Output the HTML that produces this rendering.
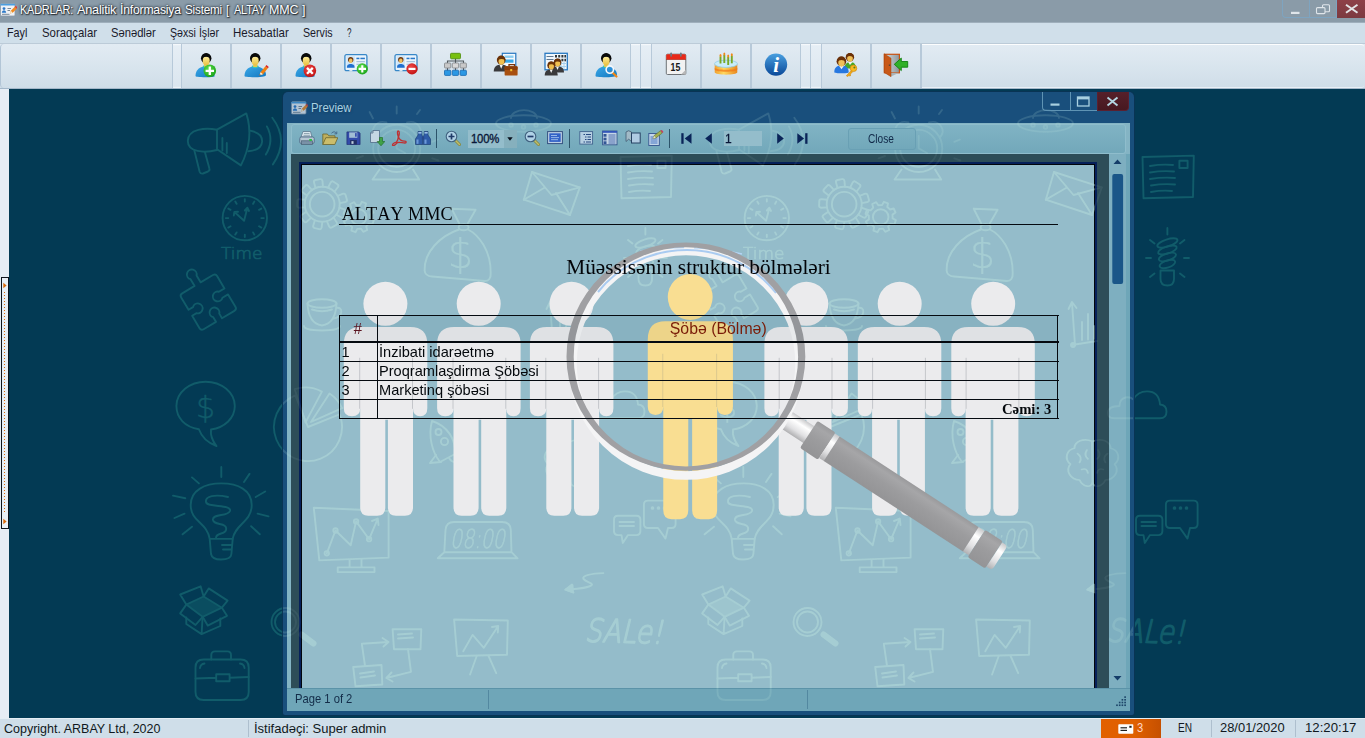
<!DOCTYPE html>
<html lang="az">
<head>
<meta charset="utf-8">
<title>KADRLAR: Analitik İnformasiya Sistemi [ ALTAY MMC ]</title>
<style>
*{box-sizing:border-box;margin:0;padding:0}
html,body{width:1365px;height:738px;overflow:hidden;background:#033a54;font-family:"Liberation Sans",sans-serif;font-size:12px;color:#101820}
.abs{position:absolute}
svg.full{position:absolute;left:0;top:0;width:1365px;height:738px;overflow:hidden;pointer-events:none}
.dood{fill:none;stroke:currentColor;stroke-width:1.9;stroke-linecap:round;stroke-linejoin:round}
.dood .dt{fill:currentColor;stroke:none;font-family:"DejaVu Sans","Liberation Sans",sans-serif}
.dood .df{fill:currentColor;fill-opacity:.55}
#titlebar{position:absolute;left:0;top:0;width:1365px;height:22px;background:#8a9ba8}
#titlebar .cap{position:absolute;left:20px;top:3px;font-size:12.6px;color:#fff;text-shadow:0 0 2px #24303c,0 0 3px #24303c,1px 1px 1px #333;white-space:nowrap;letter-spacing:-0.22px}
#menubar{position:absolute;left:0;top:22px;width:1365px;height:21px;background:#d0dfea}
#menubar span{position:absolute;transform-origin:0 0;top:3.5px;font-size:12.4px;color:#1a1a2a;white-space:nowrap}
#toolbar{position:absolute;left:0;top:43px;width:1365px;height:46px;background:linear-gradient(#e2ebf3,#d9e5ee 50%,#cfdde8);border-top:1px solid #bccbd8;border-bottom:1px solid #a4b8ca}
.tsep{position:absolute;top:44px;height:44px;width:2px;background:#b7c9d9}
.tgrip{position:absolute;top:44px;height:44px;background:linear-gradient(#fafcfe,#e6eef5 4%,#dbe6ef 96%,#f4f8fb);border-left:1px solid #b7c9d9;border-right:1px solid #b7c9d9}
.ticon{position:absolute;top:49px;width:32px;height:32px}
#leftstrip{position:absolute;left:0;top:89px;width:9px;height:629px;background:#e6edf5}
#mdi{position:absolute;left:9px;top:89px;width:1356px;height:629px;background:#033a54;overflow:hidden}
#statusbar{position:absolute;left:0;top:718px;width:1365px;height:20px;background:#cfdee9;border-top:1px solid #e4edf4}
#statusbar span,#stx span{position:absolute;transform-origin:0 0;top:3.3px;font-size:12.4px;color:#101820;white-space:nowrap}
.ssep{position:absolute;top:720px;width:1px;height:17px;background:#aebfce}
/* preview window */
#pw{position:absolute;left:283px;top:92px;width:850.500px;height:623px;background:#194f7c;border-radius:5px 5px 2px 2px;box-shadow:0 0 0 1px rgba(10,52,84,.9)}
#pwtitle{position:absolute;left:311px;top:100.800px;font-size:12.4px;color:#a9d2e2;text-shadow:0 0 3px #0c3050}
#pclient{position:absolute;left:287px;top:123px;width:843px;height:588px;background:#84b4c4}
#ptool{position:absolute;left:291px;top:123.500px;width:835px;height:30px;background:linear-gradient(#80b3c4,#72a8ba);border:1px solid #8fbdcc;border-radius:3px}
#pdark{position:absolute;left:291px;top:154px;width:818px;height:534px;background:#2d4d58}
#ppageb{position:absolute;left:299px;top:162.300px;width:798px;height:525.700px;background:#06205a}
#ppage{position:absolute;left:302.300px;top:165px;width:791.500px;height:523px;background:#94bcca;overflow:hidden;box-shadow:0 0 0 1px #02060c}
#pscroll{position:absolute;left:1109px;top:154px;width:17px;height:534px;background:#7eafc0}
#pstatus{position:absolute;left:287px;top:688px;width:843px;height:23px;background:#6fa6b8;border-top:1px solid #5b93a8}
#stx{position:absolute;left:0;top:718px}
#titlebar .cap,#pwtitle{transform-origin:0 0;white-space:nowrap}
/*FIT*/
#tw1{left:20.1px!important;transform:scaleX(0.866);display:inline-block}
#tw2{left:77.4px!important;transform:scaleX(1.009);display:inline-block}
#tw3{left:120.1px!important;transform:scaleX(0.970);display:inline-block}
#tw4{left:185.1px!important;transform:scaleX(0.931);display:inline-block}
#tw5{left:226.2px!important;transform:scaleX(0.884);display:inline-block}
#tw6{left:233.6px!important;transform:scaleX(0.867);display:inline-block}
#tw7{left:269.2px!important;transform:scaleX(0.992);display:inline-block}
#tw8{left:302.1px!important;transform:scaleX(0.975);display:inline-block}
#m1{left:7.2px!important;transform:scaleX(0.871);display:inline-block}
#m2{left:41.6px!important;transform:scaleX(0.918);display:inline-block}
#m3{left:110.8px!important;transform:scaleX(0.903);display:inline-block}
#m4{left:169.6px!important;transform:scaleX(0.856);display:inline-block}
#m5{left:232.9px!important;transform:scaleX(0.930);display:inline-block}
#m6{left:302.9px!important;transform:scaleX(0.860);display:inline-block}
#m7{left:347.1px!important;transform:scaleX(0.652);display:inline-block}
#s1{left:3.7px!important;transform:scaleX(1.008);display:inline-block}
#s2{left:254.0px!important;transform:scaleX(1.050);display:inline-block}
#s3{left:1136.9px!important;transform:scaleX(0.898);display:inline-block}
#s4{left:1177.9px!important;transform:scaleX(0.813);display:inline-block}
#s5{left:1220.0px!important;transform:scaleX(1.042);display:inline-block}
#s6{left:1305.1px!important;transform:scaleX(1.064);display:inline-block}
#pwtitle{left:310.6px!important;transform:scaleX(0.921);display:inline-block}
#pstxt{left:295.2px!important;transform:scaleX(0.905);display:inline-block}
#pcl{left:19.0px!important;transform:scaleX(0.817);display:inline-block}
#pzt{left:3.4px!important;transform:scaleX(0.940);display:inline-block}
/*ENDFIT*/
</style>
</head>
<body>
<div id="titlebar"><span class="cap" id="tw1">KADRLAR:</span> <span class="cap" id="tw2">Analitik</span> <span class="cap" id="tw3">İnformasiya</span> <span class="cap" id="tw4">Sistemi</span> <span class="cap" id="tw5">[</span> <span class="cap" id="tw6">ALTAY</span> <span class="cap" id="tw7">MMC</span> <span class="cap" id="tw8">]</span></div>
<div class="abs" style="left:0;top:22px;width:1365px;height:1px;background:#9fafbc;z-index:1"></div>
<div id="menubar">
<span id="m1" style="left:7px">Fayl</span><span id="m2" style="left:42px">Soraqçalar</span><span id="m3" style="left:111px">Sənədlər</span><span id="m4" style="left:170px">Şəxsi İşlər</span><span id="m5" style="left:233px">Hesabatlar</span><span id="m6" style="left:303px">Servis</span><span id="m7" style="left:347px">?</span>
</div>
<div id="toolbar"></div>
<svg width="0" height="0" style="position:absolute">
<defs>
<linearGradient id="gBody" x1="0" y1="0" x2="1" y2="1"><stop offset="0" stop-color="#3aa8e8"/><stop offset="1" stop-color="#1478c0"/></linearGradient>
<linearGradient id="gFace" x1="0" y1="0" x2="0" y2="1"><stop offset="0" stop-color="#fff0a0"/><stop offset="1" stop-color="#e8c040"/></linearGradient>
<radialGradient id="gGreen" cx=".4" cy=".35" r=".7"><stop offset="0" stop-color="#5de04a"/><stop offset="1" stop-color="#18a018"/></radialGradient>
<radialGradient id="gRed" cx=".4" cy=".35" r=".7"><stop offset="0" stop-color="#f04848"/><stop offset="1" stop-color="#c01010"/></radialGradient>
<linearGradient id="gInfo" x1="0" y1="0" x2="0" y2="1"><stop offset="0" stop-color="#4aa0e0"/><stop offset="1" stop-color="#0a4898"/></linearGradient>
<linearGradient id="gCake" x1="0" y1="0" x2="1" y2="0"><stop offset="0" stop-color="#f0a030"/><stop offset=".4" stop-color="#ffd860"/><stop offset="1" stop-color="#e88820"/></linearGradient>
<linearGradient id="gDoor" x1="0" y1="0" x2="1" y2="0"><stop offset="0" stop-color="#d8dde0"/><stop offset="1" stop-color="#8c979c"/></linearGradient>
<clipPath id="cpu"><rect x="0" y="0" width="24.500" height="32"/></clipPath>
<g id="user">
<path d="M5.5 27 C5.5 20.5 10 17.5 16 17.5 C22 17.5 27 20.5 27 26 C27 27.2 24 28.2 16 28.2 C8 28.2 5.5 27.6 5.5 27Z" fill="url(#gBody)"/>
<path d="M12.5 17.8 Q16.2 20.6 20 17.8 L19 16.6 L13.4 16.6Z" fill="#38c8b8"/>
<rect x="14.2" y="13" width="4" height="5" fill="#e8c850"/>
<circle cx="16.2" cy="9.2" r="5.2" fill="#0a0a0a"/>
<ellipse cx="16.2" cy="11.8" rx="3.5" ry="4.6" fill="url(#gFace)"/>
<path d="M11.3 9.5 Q16 6.2 21.2 9.6 Q19 4.5 16.2 4.4 Q12.8 4.5 11.3 9.5Z" fill="#0a0a0a"/>
</g>
<g id="bizman">
<path d="M0 14 C0 9.5 2.5 8 6.5 8 C10.500 8 13 9.500 13 14Z" fill="#3a3a3c"/>
<path d="M5 8 L6.500 11.500 L8 8Z" fill="#f4f4f4"/>
<circle cx="6.500" cy="4" r="3.800" fill="#6a3208"/>
<ellipse cx="6.700" cy="5" rx="2.500" ry="3.100" fill="#f0c050"/>
<path d="M2.800 4.300 Q6 1.800 10.300 4 Q9 0 6.500 0.100 Q3.500 0.200 2.800 4.300Z" fill="#6a3208"/>
</g>
<g id="idcard">
<rect x="0.500" y="0.500" width="22" height="16" rx="1.500" fill="#eaf4fc" stroke="#3888c8" stroke-width="1.300"/>
<rect x="2" y="2" width="8.500" height="11.500" fill="#cfe6f8"/>
<path d="M2.500 13.500 C2.500 10.500 4 9.800 6.300 9.800 C8.600 9.800 10.200 10.500 10.200 13.500Z" fill="#2070d0"/>
<circle cx="6.300" cy="5.600" r="2.700" fill="#703810"/>
<ellipse cx="6.300" cy="6.600" rx="1.800" ry="2.300" fill="#f0c060"/>
<rect x="12" y="3.500" width="3" height="1.500" fill="#2878c8"/><rect x="16" y="3.500" width="4.500" height="1.500" fill="#2878c8"/>
<rect x="12" y="6.800" width="8.500" height="1.200" fill="#a8c4dc"/>
<rect x="12" y="9.500" width="6" height="1.200" fill="#a8c4dc"/>
<rect x="5" y="15.500" width="3" height="1.800" fill="#d8e6f0"/><rect x="15" y="15.500" width="3" height="1.800" fill="#d8e6f0"/>
</g>
</defs>
</svg>
<div class="tgrip" style="left:172px;width:10px"></div>
<div class="tsep" style="left:230px"></div><div class="tsep" style="left:280px"></div><div class="tsep" style="left:330px"></div><div class="tsep" style="left:380px"></div><div class="tsep" style="left:430px"></div><div class="tsep" style="left:480px"></div><div class="tsep" style="left:530px"></div><div class="tsep" style="left:580px"></div>
<div class="tgrip" style="left:630px;width:11px"></div><div class="tgrip" style="left:640px;width:12px"></div>
<div class="tsep" style="left:700px"></div><div class="tsep" style="left:750px"></div>
<div class="tgrip" style="left:800px;width:11px"></div><div class="tgrip" style="left:810px;width:12px"></div>
<div class="tsep" style="left:870px"></div><div class="tsep" style="left:920px"></div>
<div class="abs" style="left:922px;top:44px;width:441.500px;height:44px;border-top:1.500px solid #fcfdfe;border-bottom:1.500px solid #e9f0f6;border-radius:0 3px 3px 0"></div>
<div class="abs" style="left:0;top:44px;width:6px;height:44px;border-left:1.500px solid #b2c5d6;border-radius:4px 0 0 4px"></div>
<!-- 1 user add -->
<svg class="ticon" style="left:190px" viewBox="0 0 32 32"><g clip-path="url(#cpu)"><use href="#user"/></g><circle cx="19.800" cy="21.800" r="6.300" fill="url(#gGreen)"/><path d="M19.800 17.600v8.400M15.600 21.800h8.400" stroke="#fff" stroke-width="2.300"/></svg>
<!-- 2 user edit -->
<svg class="ticon" style="left:238.700px" viewBox="0 0 32 32"><use href="#user"/><path d="M20.300 26.500 L21.600 23.200 L26.400 17.200 L28.800 19.200 L24 25.200Z" fill="#f08010"/><path d="M26.400 17.200 L27.400 16 L29.800 18 L28.800 19.200Z" fill="#e02020"/><path d="M20.300 26.500 L21.600 23.200 L24 25.200Z" fill="#f4f0e0"/><path d="M20.300 26.500 L20.800 25.200 L21.800 26Z" fill="#101010"/></svg>
<!-- 3 user delete -->
<svg class="ticon" style="left:290px" viewBox="0 0 32 32"><g clip-path="url(#cpu)"><use href="#user"/></g><circle cx="19.900" cy="21.800" r="6.300" fill="url(#gRed)"/><path d="M17 18.900l5.800 5.800M22.800 18.900l-5.800 5.800" stroke="#fff" stroke-width="2.300"/></svg>
<!-- 4 card add -->
<svg class="ticon" style="left:340px" viewBox="0 0 32 32"><use href="#idcard" x="4.400" y="5.200"/><circle cx="22.300" cy="19.900" r="5.600" fill="url(#gGreen)"/><path d="M22.300 16.200v7.400M18.600 19.900h7.400" stroke="#fff" stroke-width="2.100"/></svg>
<!-- 5 card remove -->
<svg class="ticon" style="left:390px" viewBox="0 0 32 32"><use href="#idcard" x="4.500" y="5.200"/><circle cx="22" cy="19.900" r="5.600" fill="url(#gRed)"/><path d="M18.500 19.900h7" stroke="#fff" stroke-width="2.200"/></svg>
<!-- 6 org chart -->
<svg class="ticon" style="left:440px" viewBox="0 0 32 32"><path d="M15.500 9.500v12M7.500 14.500v-2.500h16v2.500M7.500 19v3M23.500 19v3" stroke="#50585c" stroke-width="1.100" fill="none"/><rect x="10.500" y="4.300" width="10" height="5.500" rx="1" fill="#78c010" stroke="#4a8a08" stroke-width=".8"/><rect x="4.500" y="14" width="6.300" height="5" rx=".8" fill="#c8c8c8" stroke="#808488" stroke-width=".8"/><rect x="12.300" y="14" width="6.300" height="5" rx=".8" fill="#d8d8d8" stroke="#808488" stroke-width=".8"/><rect x="20.100" y="14" width="6.300" height="5" rx=".8" fill="#c8c8c8" stroke="#808488" stroke-width=".8"/><rect x="4.500" y="21.200" width="6.300" height="5.200" rx=".8" fill="#2c98e4" stroke="#1868b0" stroke-width=".8"/><rect x="12.300" y="21.200" width="6.300" height="5.200" rx=".8" fill="#2c98e4" stroke="#1868b0" stroke-width=".8"/><rect x="20.100" y="21.200" width="6.300" height="5.200" rx=".8" fill="#2c98e4" stroke="#1868b0" stroke-width=".8"/></svg>
<!-- 7 person+doc+briefcase -->
<svg class="ticon" style="left:490px" viewBox="0 0 32 32"><rect x="12.300" y="4.300" width="13.500" height="14" fill="#f4f9fd" stroke="#2878c0" stroke-width="1.200"/><rect x="14.500" y="6.500" width="9" height="2.400" fill="#8ccdf0"/><rect x="14.500" y="10.500" width="9" height="3.200" fill="#38a8e8"/><use href="#bizman" x="4.300" y="7.300" transform="translate(-1.200 -1.900) scale(1.150)"/><path d="M19 17.500v-1.800h5.500v1.800" fill="none" stroke="#7a3408" stroke-width="1.300"/><rect x="14.600" y="17.300" width="13" height="9.300" rx="1.200" fill="#a85010"/><rect x="14.600" y="17.300" width="13" height="3.600" rx="1.200" fill="#8a3c08"/><rect x="20.200" y="20" width="2" height="2.200" fill="#f0c030"/></svg>
<!-- 8 people + grid -->
<svg class="ticon" style="left:540px" viewBox="0 0 32 32"><rect x="5" y="4.300" width="22.300" height="16.500" fill="#f0f7fc" stroke="#2878c0" stroke-width="1.300"/><path d="M6.500 7.500h7M6.500 10.500h7" stroke="#607890" stroke-width="1"/><g fill="#30383c"><rect x="15" y="6" width="2" height="2.500"/><rect x="18.200" y="6" width="2" height="2.500"/><rect x="21.400" y="6" width="2" height="2.500"/><rect x="24.400" y="6" width="1.600" height="2.500"/><rect x="18.200" y="9.800" width="2" height="2.500"/><rect x="21.400" y="9.800" width="2" height="2.500"/><rect x="24.400" y="9.800" width="1.600" height="2.500"/></g><path d="M18 14.500h9M18 17.500h9M21 13v7.500M24 13v7.500" stroke="#a8d0ec" stroke-width="1"/><use href="#bizman" x="11" y="9.500"/><use href="#bizman" x="4.700" y="12.400"/></svg>
<!-- 9 user search -->
<svg class="ticon" style="left:590px" viewBox="0 0 32 32"><use href="#user"/><path d="M22 23l4.500 4.500" stroke="#f08818" stroke-width="2.200" stroke-linecap="round"/><circle cx="19.800" cy="20.600" r="3.700" fill="#2c90e0" fill-opacity=".55" stroke="#f4f8fc" stroke-width="1.600"/></svg>
<!-- 10 calendar -->
<svg class="ticon" style="left:660px" viewBox="0 0 32 32"><rect x="6.300" y="5.200" width="19.500" height="20.300" rx="1.200" fill="#f2f2f2" stroke="#606468" stroke-width=".9"/><path d="M6.300 10.500v-4.100q0-1.200 1.200-1.200h17.100q1.200 0 1.200 1.200v4.100z" fill="#e82818"/><path d="M6.300 10.500h19.500" stroke="#a81808" stroke-width=".6"/><rect x="10.300" y="3.500" width="1.700" height="4.200" rx=".8" fill="#707880"/><rect x="20" y="3.500" width="1.700" height="4.200" rx=".8" fill="#707880"/><path d="M21 25.500l4.800-4.800v4.800z" fill="#b8b8b8"/><text x="15.500" y="21.800" font-family="Liberation Sans,sans-serif" font-weight="bold" font-size="10.500" text-anchor="middle" fill="#181818" textLength="9.800" lengthAdjust="spacingAndGlyphs">15</text></svg>
<!-- 11 cake -->
<svg class="ticon" style="left:710px" viewBox="0 0 32 32"><path d="M4.700 15v8.300c0 3.200 22.600 3.200 22.600 0V15z" fill="url(#gCake)"/><path d="M4.700 18.500c0 3 22.600 3 22.600 0v2c0 3-22.600 3-22.600 0z" fill="#f07818" fill-opacity=".75"/><ellipse cx="16" cy="14.800" rx="11.500" ry="3.600" fill="#c8ecfa" stroke="#90cce8" stroke-width=".8"/><g stroke="#78a828" stroke-width="1.900"><path d="M10.500 7.500v7"/><path d="M14.300 6v8"/><path d="M18.200 8v8"/><path d="M21.800 6.800v7.500"/></g><g fill="#f08818"><ellipse cx="10.500" cy="6.500" rx="1" ry="1.500"/><ellipse cx="14.300" cy="5" rx="1" ry="1.500"/><ellipse cx="18.200" cy="7" rx="1" ry="1.500"/><ellipse cx="21.800" cy="5.800" rx="1" ry="1.500"/></g></svg>
<!-- 12 info -->
<svg class="ticon" style="left:760px" viewBox="0 0 32 32"><circle cx="16" cy="15.600" r="11.200" fill="url(#gInfo)"/><text x="16.200" y="23" font-family="Liberation Serif,serif" font-style="italic" font-weight="bold" font-size="21" text-anchor="middle" fill="#fff">i</text></svg>
<!-- 13 users key -->
<svg class="ticon" style="left:830px" viewBox="0 0 32 32"><path d="M14.500 19.500c0-5 3-6.500 6-6.500s5.500 2 5.500 6.500z" fill="#48a828"/><path d="M18 13l2 3 2.500-3z" fill="#f4f4f4"/><circle cx="19.900" cy="8.200" r="4.200" fill="#6a3008"/><ellipse cx="20" cy="9.500" rx="2.800" ry="3.300" fill="#f0c058"/><path d="M15.800 8.500q4-3 8.300 0q-1-4.600-4.200-4.500q-3.200 0-4.100 4.500z" fill="#6a3008"/><path d="M4.300 23.200c0-5 3-6.700 7.200-6.700s7.200 1.700 7.200 6.700c0 1.400-14.400 1.400-14.400 0z" fill="#2878e0"/><path d="M8.800 16.600l2.700 3.600 2.700-3.600z" fill="#f4f4f4"/><circle cx="11.400" cy="12.400" r="4.800" fill="#6a3008"/><ellipse cx="11.500" cy="13.800" rx="3.200" ry="3.800" fill="#f0c058"/><path d="M6.700 12.700q4.600-3.400 9.500 0q-1.200-5.200-4.800-5.100q-3.700.1-4.700 5.100z" fill="#6a3008"/><path d="M21.500 21.300l-5.200 5.500l1.500.8l1.200-1.200l.8.800l1.200-1.200l-.7-.8l2.500-2.500" fill="#f0a818" stroke="#c88008" stroke-width=".5"/><circle cx="23.500" cy="19.300" r="3.300" fill="#f8b820" stroke="#c88008" stroke-width=".6"/><circle cx="24.400" cy="18.400" r="1" fill="#58801a"/></svg>
<!-- 14 door exit -->
<svg class="ticon" style="left:880px" viewBox="0 0 32 32"><rect x="4.400" y="5.300" width="15" height="18.500" fill="url(#gDoor)" stroke="#c85010" stroke-width="1.200"/><path d="M11 27.500l8-3.700h-8z" fill="#aab4b8"/><path d="M4.200 4.800l6.800 4.400v18.500l-6.800-4.300z" fill="#c85818" stroke="#a04008" stroke-width=".5"/><path d="M8.800 16.200h1.400" stroke="#404040" stroke-width="1.200"/><path d="M14.300 15.300l7-6.200v3.400h6.400v5.700h-6.400v3.400z" fill="#30b028" stroke="#108010" stroke-width=".9"/></svg>

<div id="leftstrip"></div>
<div id="mdi">
<svg class="full" style="left:-9px;top:-89px;color:#115c6a" viewBox="0 0 1365 738"><defs><g id="tile"><path d="M217 129.700C206 127.500 187.800 128.500 187.800 141C187.800 152 204 153.500 217 150"/>
<path d="M194.300 150.300L199.700 172Q200.500 174 203 173.500L208 171.500Q210 170.500 209.400 168.500L205 152.400"/>
<path d="M217 129.700L246.300 113.400Q254.500 139 240.900 165.400L217 149.200Z"/>
<path d="M250.600 130.800Q262.500 133 262.100 141.600Q261.500 150 248.400 151.300"/>
<path d="M222.400 138V150.500M226.800 143V153"/>
<path d="M266.900 126.400Q274.500 140.500 265.800 154.600M272.300 117.800Q289.500 140.500 272.900 164.400"/>
<circle cx="244.8" cy="218.1" r="22.2"/>
<path d="M244.100 220.700L234.400 212M233.800 215.500L234.400 212L238 211.800M244.100 220.700L247.400 207.700M244.800 210.500L247.400 207.700L249 211"/>
<path d="M261.3 218.1L263.8 218.1M259.1 226.3L261.3 227.6M253.1 232.4L254.3 234.6M244.8 234.6L244.8 237.1M236.6 232.4L235.3 234.6M230.5 226.3L228.3 227.6M228.3 218.1L225.8 218.1M230.5 209.8L228.3 208.6M236.6 203.8L235.3 201.6M244.8 201.6L244.8 199.1M253.1 203.8L254.3 201.6M259.1 209.8L261.3 208.6"/>
<text x="221.0" y="258.5" font-size="16.5" fill="currentColor" stroke="currentColor" stroke-width="0.7" font-family="'DejaVu Sans Light','DejaVu Sans',sans-serif" font-weight="200" textLength="41.5" lengthAdjust="spacingAndGlyphs">Time</text>
<path d="M-20.900 -17.900Q-20.900 -20.900 -17.900 -20.900L-3.500 -20.900L-3.500 -28.800A4.900 4.900 0 1 1 3.500 -28.800L3.500 -20.900L17.900 -20.900Q20.900 -20.900 20.900 -17.900L20.900 -3.500L14.400 -3.500A4.900 4.900 0 1 0 14.400 3.500L20.900 3.500L20.900 17.900Q20.900 20.900 17.900 20.900L3.500 20.900L3.500 15.500A4.900 4.900 0 1 0 -3.500 15.500L-3.500 20.900L-17.900 20.900Q-20.900 20.900 -20.900 17.900L-20.900 3.500L-15.700 3.500A4.900 4.900 0 1 0 -15.700 -3.500L-20.900 -3.500Z" transform="translate(208.300 302.100) rotate(-30.800)"/>
<path d="M198.900 429.200C185 427 176.400 418 176.400 406.100C176.400 392.600 189.500 381.700 205.600 381.700C221.700 381.700 234.800 392.600 234.800 406.100C234.800 418 225 427.500 211 429.500Q210 438 216.500 446Q203 441 198.900 429.200Z"/>
<text x="205.6" y="418.0" font-size="30" fill="currentColor" stroke="currentColor" stroke-width="0.4" font-family="'DejaVu Sans Light','DejaVu Sans',sans-serif" font-weight="200" text-anchor="middle">$</text>
<path d="M209.700 538.900C207 522 190.700 522 190.700 505C190.700 490 205 483.400 221.300 483.400C238 483.400 251.700 490 251.700 505C251.700 522 235 524 232.700 538.900"/>
<path d="M209.700 538.900L211 554Q212 559.500 221 559.500Q231 559.500 231.400 554L232.700 538.900ZM222 545H231M223 549.500H231"/>
<path d="M228 497C215 494 205 496 206 502C207 508 232 504 230 511C228 517 212 513 213 520C214 526 228 522 226 530C225 535 216 532 216 538"/>
<path d="M221.300 467V477M192 477.400L198.900 483.400M173 495.600L185.300 498.300M174.500 518L184.500 513.700M182.600 534.300L192 526.700M244 482L249.500 473.900M255.700 497L265.200 491.500M257.600 513.700L268.500 516.400M251.100 526.200L259.800 534.300"/>
<path d="M186.300 604.600L203.600 596.500L221.900 607.700L202.600 616.800Z" fill="currentColor" fill-opacity=".55"/>
<path d="M186.300 604.600L180.200 594.500L200.600 586.300L203.600 596.500L208.700 588.400L227.600 600.600L221.900 607.700L227 615.800L207.700 625.600L202.600 616.800L195.500 625L180.200 613.400Z"/>
<path d="M186.300 617.500V624L201.600 634.100L220.300 626V618.500M202.600 616.800L201.600 634.100"/>
<path d="M203.500 659.500H240.700Q248.700 659.500 248.700 667.500V692Q248.700 700 240.700 700H203.500Q195.500 700 195.500 692V667.500Q195.500 659.500 203.500 659.500Z"/>
<path d="M211.300 659.500V655Q211.300 651.400 215 651.400H227.500Q231 651.400 231 655V659.500"/>
<path d="M195.500 678.500L216.200 677.800M229.600 677.800L248.700 677M216.200 674.300H229.600V681.300H216.200ZM200 668Q200.500 664 204.500 663.500M244.500 668Q244 664 240 663.500"/>
<circle cx="322.2" cy="204.2" r="17.5"/>
<circle cx="322.2" cy="204.2" r="12.3"/>
<path d="M17.300 -3.800L23 -4.300Q25 -4.300 25 -2.300V2.300Q25 4.300 23 4.300L17.300 3.800" transform="translate(322.200 204.200) rotate(-100)"/>
<path d="M17.300 -3.800L23 -4.300Q25 -4.300 25 -2.300V2.300Q25 4.300 23 4.300L17.300 3.800" transform="translate(322.200 204.200) rotate(-58)"/>
<path d="M17.300 -3.800L23 -4.300Q25 -4.300 25 -2.300V2.300Q25 4.300 23 4.300L17.300 3.800" transform="translate(322.200 204.200) rotate(-16)"/>
<path d="M17.300 -3.800L23 -4.300Q25 -4.300 25 -2.300V2.300Q25 4.300 23 4.300L17.300 3.800" transform="translate(322.200 204.200) rotate(24)"/>
<path d="M17.300 -3.800L23 -4.300Q25 -4.300 25 -2.300V2.300Q25 4.300 23 4.300L17.300 3.800" transform="translate(322.200 204.200) rotate(62)"/>
<path d="M17.300 -3.800L23 -4.300Q25 -4.300 25 -2.300V2.300Q25 4.300 23 4.300L17.300 3.800" transform="translate(322.200 204.200) rotate(102)"/>
<path d="M17.300 -3.800L23 -4.300Q25 -4.300 25 -2.300V2.300Q25 4.300 23 4.300L17.300 3.800" transform="translate(322.200 204.200) rotate(142)"/>
<path d="M17.300 -3.800L23 -4.300Q25 -4.300 25 -2.300V2.300Q25 4.300 23 4.300L17.300 3.800" transform="translate(322.200 204.200) rotate(182)"/>
<path d="M17.300 -3.800L23 -4.300Q25 -4.300 25 -2.300V2.300Q25 4.300 23 4.300L17.300 3.800" transform="translate(322.200 204.200) rotate(222)"/>
<path d="M370.6 218.4 L373.9 220.2 L372.4 224.3 L368.7 223.6 L366.2 226.4 L367.2 230.0 L363.2 231.8 L361.1 228.8 L357.3 228.9 L355.5 232.2 L351.4 230.7 L352.1 227.0 L349.3 224.5 L345.7 225.5 L343.9 221.5 L346.9 219.4 L346.8 215.6 L343.5 213.8 L345.0 209.7 L348.7 210.4 L351.2 207.6 L350.2 204.0 L354.2 202.2 L356.3 205.2 L360.1 205.1 L361.9 201.8 L366.0 203.3 L365.3 207.0 L368.1 209.5 L371.7 208.5 L373.5 212.5 L370.5 214.6Z"/>
<circle cx="358.7" cy="217.0" r="7.8"/>
<circle cx="396.7" cy="148.4" r="23.6"/>
<circle cx="396.7" cy="148.4" r="18.5"/>
<path d="M396.700 148.400V136M396.700 148.400L405 153"/>
<path d="M372.600 179.500L379.500 169.500M419.200 179.500L413 169.500M372.600 179.500H419.200"/>
<path d="M375.500 137.500C369 130 376 119.500 386.500 122.500M418 137.500C424.500 130 417.500 119.500 407 122.500"/>
<path d="M396.700 106.500V113.500M369.600 112L373 118.500M420 110L417 114M437.800 139.600L432.300 141.800M356.500 158.300L363 156M432.300 158.300L438.400 160.500"/>
<ellipse cx="523.5" cy="123.5" rx="27.5" ry="8.2"/>
<path d="M511 118C512 107.500 536 107.500 537 118"/>
<circle cx="511.0" cy="125.0" r="1.8"/>
<circle cx="523.5" cy="127.0" r="1.8"/>
<circle cx="536.0" cy="125.0" r="1.8"/>
<path d="M532 172L579.800 187.400L570 215L523.800 199.700Z"/>
<path d="M532 172L551.500 195L579.800 187.400M523.800 199.700L544 188M570 215L556 193"/>
<path d="M620.500 157L671.800 155.600L671 197L621.500 198.300Z"/>
<path d="M657.400 160.700H665.600V168H657.400Z"/>
<path d="M628 166Q640 164 651 165M628 172.500Q640 170.500 652 171.500M628 179Q641 177 653 178M629 185.500Q641 183.500 653 184.500M629 192Q640 190 650 191"/>
<path d="M451.700 208.800L475.600 209.800L467.500 224M451.700 208.800L459.500 224"/>
<ellipse cx="463.6" cy="227.2" rx="5.0" ry="3.0"/>
<path d="M459 229.500C440 236 424 252 424.600 270.500Q425 276 432 276.500L485 281Q491 281 490.700 273C491 251 479 235 468 229.500"/>
<text x="460.4" y="268.0" font-size="40" fill="currentColor" stroke="currentColor" stroke-width="0.2" font-family="'DejaVu Sans Light','DejaVu Sans',sans-serif" font-weight="200" text-anchor="middle">$</text>
<ellipse cx="645.4" cy="243.0" rx="10.5" ry="3.6" transform="rotate(-18 645.400 243)"/>
<ellipse cx="645.4" cy="250.0" rx="9.7" ry="3.6" transform="rotate(-18 645.400 250)"/>
<ellipse cx="645.4" cy="257.0" rx="8.9" ry="3.6" transform="rotate(-18 645.400 257)"/>
<ellipse cx="645.4" cy="264.0" rx="8.1" ry="3.6" transform="rotate(-18 645.400 264)"/>
<path d="M638.500 270.500V279Q638.500 285.500 645.400 285.500Q652 285.500 652 279V270.500Z"/>
<path d="M645.400 228V234.500M628 240L632.500 243.500M662.500 240L658 243.500M624 258H629M662 258H667M628 277L632.500 273.500M662.500 277L658 273.500"/>
<ellipse cx="322.0" cy="303.5" rx="14.5" ry="4.2"/>
<path d="M307.500 303.500C308 316 312 324 322 325.500C332 324 336 316 336.500 303.500M336 308C343 306 344 317 333.500 318.500"/>
<path d="M304 326C304 332 340 332 340 326M312 309.500Q322 313 332 309.500"/>
<path d="M308 427L339.500 414.300A34 34 0 1 1 295.300 395.500Z"/>
<path d="M305.500 422.500L294.700 389.200A35 35 0 0 1 321.900 391.600Z"/>
<path d="M311 422L329.500 393.500A34 34 0 0 1 342.100 408.200Z"/>
<path d="M432 421C428 436 432 452 440 462L455 454C456 440 448 426 432 421Z"/>
<circle cx="438.5" cy="432.0" r="3.0"/>
<circle cx="444.5" cy="441.5" r="3.6"/>
<path d="M436 455L430 463L441 462M455 448L460 444M449 458Q452 463 457 462"/>
<path d="M313.800 507.800L388.600 511L388.600 557.600L319.300 560.400Z"/>
<path d="M349.600 560V567.400M361.500 559.500V567.400M337.700 567.400H374.500V572.100H337.700Z"/>
<path d="M326.800 553.300L335.500 530.500L350.700 545.300L356.100 521.400L369.100 539.200L377.800 518.600M372 521L377.800 518.600L378.500 525"/>
<circle cx="326.8" cy="553.3" r="2.2"/>
<circle cx="335.5" cy="530.5" r="2.2"/>
<circle cx="356.1" cy="521.4" r="2.2"/>
<circle cx="369.1" cy="539.2" r="2.2"/>
<path d="M444.300 552.200L445.500 530Q446 522 454 522H502Q510.500 522 510.800 530L511.500 552.200M437.800 558.300L444.300 552.200H511.500L517.600 558.300Z"/>
<text x="450.0" y="547.5" font-size="26" fill="currentColor" stroke="currentColor" stroke-width="0.5" font-family="'DejaVu Sans Light','DejaVu Sans',sans-serif" font-weight="200" textLength="55" lengthAdjust="spacingAndGlyphs" font-style="italic">08:00</text>
<path d="M392.600 629.300L421.300 629.300L420.500 649.200L394 649.200ZM398 634.500L412 633.500M398 638.500L413 637.500"/>
<path d="M353.200 667L381.500 665L382.300 684.500L355.500 686.200ZM360 673.500L374 671.500M360.500 677.500L375 675.500"/>
<path d="M364.900 665L361.800 643.700L388.500 642M382.500 638L388.500 642L383.500 646.500"/>
<path d="M408 649.200L411 671.800L386.400 678M391.500 672.500L386.400 678L392.500 681.500"/>
<path d="M454.100 619.500L507.800 620.500L507 654.800L457.200 656Z"/>
<path d="M476.700 656L470.100 674.500M488.600 656L496.200 673.200"/>
<path d="M463.300 651.300L472.600 634.900L483.800 647.800L498.200 626M492 627L498.200 626L497.800 632.500"/>
<circle cx="285.5" cy="622.0" r="14.0"/>
<circle cx="285.5" cy="622.0" r="10.5"/>
<path d="M301.500 634.500L313.500 643.500" stroke-width="6" stroke-linecap="round"/>
<path d="M618 515.700H636.400Q640.400 515.700 640.400 519.700V531.100Q640.400 535.100 636.400 535.100H628L622.800 543L621.500 535.100H618Q614 535.100 614 531.100V519.700Q614 515.700 618 515.700ZM619.500 522H634M619.500 526H634"/>
<path d="M648 500.600H671.500Q675.600 500.600 675.600 504.600V524Q675.600 528 671.500 528H668L665.500 538.600L658 528H648Q643.900 528 643.900 524V504.600Q643.900 500.600 648 500.600Z"/>
<circle cx="652.5" cy="508.0" r="0.9"/>
<circle cx="658.5" cy="508.0" r="0.9"/>
<circle cx="664.5" cy="508.0" r="0.9"/>
<path d="M603.400 573.100C592 573.500 581 575.500 583.500 579C587 583 597 583.500 589 586.500C582 589 573 589 566 589.700M572 584.500L565.400 589.700L573.500 592.500"/>
<text x="584.5" y="641.5" font-size="32" fill="currentColor" stroke="currentColor" stroke-width="1.5" font-family="'DejaVu Sans Light','DejaVu Sans',sans-serif" font-weight="200" font-style="italic" textLength="78" lengthAdjust="spacingAndGlyphs" transform="rotate(1.5 585 642)">SALe!</text>
<path d="M565.400 589.700L572.500 585L573 592.200Z" fill="currentColor"/>
<path d="M553 345L550 303M546.500 309L550 302L554.500 308M550 345L575 341M560 340V322M566 339.500V314M572 339V326"/>
<circle cx="551.0" cy="345.0" r="2.0"/>
<path d="M592 418.300H638Q644.500 418.300 644.500 411.500Q644.500 405 638 404.500Q637 391.400 625 391.400Q615.500 391.400 611.500 399.500Q608 396.500 603.500 397.500Q597.500 399 597.500 406Q586 406 586 413Q586 418.300 592 418.300Z"/>
<path d="M580 448C572 444 563 448 563 456C555 458 553 468 559 474C554 481 559 492 568 492C571 500 580 502 580.500 494ZM581 448C589 444 598 448 598 456C606 458 608 468 602 474C607 481 602 492 593 492C590 500 581 502 580.500 494" transform="translate(570.500 463.700) scale(1.030 .880) translate(-580.500 -473.500)"/>
<path d="M566 462Q571 466 568 472M575 458Q572 464 576 468M570 480Q575 478 576 484M595 462Q590 466 593 472M586 458Q589 464 585 468M591 480Q586 478 585 484" transform="translate(570.500 463.700) scale(1.030 .880) translate(-580.500 -473.500)"/></g></defs><g class="dood"><use href="#tile"/><use href="#tile" x="522"/></g></svg>
</div>
<div id="pw"></div>
<div id="pwtitle">Preview</div>
<div id="pclient"></div>
<div id="ptool"></div>
<div id="pdark"></div>
<div id="ppageb"></div>
<div id="ppage"></div>
<div id="pscroll"></div>
<div class="abs" style="left:1126px;top:154px;width:4px;height:534px;background:#6ea6b8"></div>
<div id="pstatus"></div>
<svg class="full" viewBox="0 0 1365 738" style="color:#c8f0e4"><defs>
<clipPath id="cpw"><path clip-rule="evenodd" d="M287 92h842q4 0 4 4v619h-850v-619q0-4 4-4zM291 154v534h818v-534z"/></clipPath>
<clipPath id="cpd"><path clip-rule="evenodd" d="M291 154h818v534h-818zM302 165v523h793v-523z"/></clipPath>
<clipPath id="cpage"><rect x="302" y="165" width="793" height="523"/></clipPath></defs>
<g clip-path="url(#cpw)"><g class="dood" opacity=".15"><use href="#tile"/><use href="#tile" x="522"/></g></g>
<g clip-path="url(#cpd)"><g class="dood" opacity=".07"><use href="#tile"/><use href="#tile" x="522"/></g></g>
<g clip-path="url(#cpage)"><g class="dood" opacity=".34"><use href="#tile"/><use href="#tile" x="522"/></g></g>
</svg>

<svg class="full" viewBox="0 0 1365 738">
<defs>
<linearGradient id="gSil" x1="0" y1="0" x2="0" y2="1"><stop offset="0" stop-color="#c8c8ca"/><stop offset=".3" stop-color="#ffffff"/><stop offset=".7" stop-color="#e0e0e2"/><stop offset="1" stop-color="#b0b0b2"/></linearGradient>
<linearGradient id="gHan" x1="0" y1="0" x2="0" y2="1"><stop offset="0" stop-color="#9a9a9c"/><stop offset=".18" stop-color="#a6a6a8"/><stop offset=".5" stop-color="#9c9c9e"/><stop offset="1" stop-color="#949496"/></linearGradient>
<g id="man"><circle cx="0" cy="22" r="22"/><path d="M-41.600 62.500Q-41.600 45.200 -24.600 45.200H24.900Q41.900 45.200 41.900 62.500V126.500Q41.900 134.500 34.8 134.500Q27.6 134.500 27.6 126.500V225.500Q27.6 234 19.6 234H10.5Q2.5 234 2.5 225.500V138H-0.1V225.500Q-0.1 234 -8.1 234H-17.2Q-25.2 234 -25.2 225.500V126.500Q-25.2 134.500 -33.4 134.500Q-41.600 134.500 -41.600 126.500Z"/><path d="M-25.7 76V127M27.1 76V127" stroke="#c4c6ca" stroke-width="1" fill="none"/></g>
<g id="manc"><circle cx="0" cy="22" r="22"/><path d="M-41.600 62.500Q-41.600 45.200 -24.600 45.200H24.900Q41.900 45.200 41.900 62.500V126.500Q41.900 134.500 34.1 134.500Q26.4 134.500 26.4 126.500V225.500Q26.4 234 18.4 234H9.9Q1.9 234 1.9 225.500V138H-1.9V225.500Q-1.9 234 -9.9 234H-18.4Q-26.4 234 -26.4 225.500V126.500Q-26.4 134.500 -34.0 134.500Q-41.600 134.500 -41.600 126.500Z"/><path d="M-26.9 76V127M25.9 76V127" stroke="#dcc98e" stroke-width="1" fill="none"/></g>
</defs>
<g clip-path="url(#cpage)">
<g fill="#ebebed">
<use href="#man" x="385.400" y="281.800"/><use href="#man" x="478.700" y="281.800"/><use href="#man" x="571.500" y="281.800"/>
<use href="#man" transform="translate(806.300 281.800) scale(-1 1)"/><use href="#man" transform="translate(899.700 281.800) scale(-1 1)"/><use href="#man" transform="translate(993.200 281.800) scale(-1 1)"/>
</g>
<g fill="#f9de92" transform="translate(690.200 274) scale(1.020 1.048)"><use href="#manc"/></g>
<!-- magnifier -->
<g transform="translate(686.400 354.800) rotate(33.050)">
<rect x="116" y="-10" width="32" height="20" fill="url(#gSil)"/>
<rect x="146" y="-16.200" width="21.500" height="32.400" rx="2" fill="url(#gHan)"/>
<rect x="167.500" y="-15" width="6" height="29" fill="url(#gSil)"/>
<rect x="173" y="-15" width="166.500" height="29" fill="url(#gHan)"/>
<rect x="339" y="-15" width="7" height="29" fill="url(#gSil)"/>
<rect x="346" y="-16.200" width="21" height="32.400" rx="2" fill="url(#gHan)"/>
<path d="M367 -15h3q3.500 0 3.500 4v21q0 4 -3.500 4h-3z" fill="url(#gSil)"/>
</g>
<ellipse cx="686" cy="363.300" rx="113.500" ry="112.300" fill="none" stroke="#f4f4f5" stroke-width="8.500"/>
<path d="M598 292A112 108 0 0 1 776 293" fill="none" stroke="#a4c8f0" stroke-width="2" opacity=".95"/><path d="M640 251.500Q662 247.500 684 247.500M694 247.800Q720 248.500 742 254" fill="none" stroke="#b4d4f4" stroke-width="1.300"/>
<path fill-rule="evenodd" fill="#a0a0a3" d="M566.5 356.6a119.4 114.1 0 1 0 238.8 0a119.4 114.1 0 1 0 -238.8 0zM573.7 356.9a112.2 109.5 0 1 0 224.4 0a112.2 109.5 0 1 0 -224.4 0z"/>
</g>
</svg>

<style>
#pg{position:absolute;left:0;top:0;width:1365px;height:738px;clip-path:inset(165px 270px 50px 302px);pointer-events:none}
#pg .l{position:absolute;background:#050a10}
#pg .t{position:absolute;white-space:nowrap;transform-origin:0 0;line-height:1}
#pg .ser{font-family:"Liberation Serif",serif}
</style>
<div class="abs" style="left:340px;top:316px;width:718px;height:26px;background:rgb(12,10,9);mix-blend-mode:difference"></div>
<div id="pg">
<div class="t ser" id="tco" style="left:341.700px;top:204.500px;font-kerning:none;font-size:18.250px;color:#020408">ALTAY MMC</div>
<div class="l" style="left:339px;top:223.700px;width:719px;height:1.200px"></div>
<div class="t ser" id="ttl" style="left:566.300px;top:256.500px;font-size:21.250px;color:#020408">Müəssisənin struktur bölmələri</div>
<div class="l" style="left:339px;top:315px;width:719.500px;height:1.200px"></div>
<div class="l" style="left:339px;top:340.800px;width:719.500px;height:2.200px"></div>
<div class="l" style="left:339px;top:360.500px;width:719.500px;height:1.200px"></div>
<div class="l" style="left:339px;top:379.500px;width:719.500px;height:1.200px"></div>
<div class="l" style="left:339px;top:398.500px;width:719.500px;height:1.200px"></div>
<div class="l" style="left:339px;top:417.600px;width:719.500px;height:1.200px"></div>
<div class="l" style="left:339px;top:315px;width:1.200px;height:103.600px"></div>
<div class="l" style="left:377px;top:315px;width:1.200px;height:103.600px"></div>
<div class="l" style="left:1057.300px;top:315px;width:1.200px;height:103.600px"></div>
<div class="t ser" id="thash" style="left:353.500px;top:320px;font-size:17px;color:#5a1420">#</div>
<div class="t" id="thead" style="left:669.800px;top:321px;font-size:15.850px;color:#7a1c08">Şöbə (Bölmə)</div>
<div class="t" id="r1n" style="left:341.500px;top:344.500px;font-size:14.600px;color:#04080c">1</div>
<div class="t" id="r1" style="left:379px;top:344.500px;font-size:14.600px;color:#04080c">İnzibati idarəetmə</div>
<div class="t" id="r2n" style="left:341.500px;top:363.500px;font-size:14.600px;color:#04080c">2</div>
<div class="t" id="r2" style="left:379px;top:363.500px;font-size:14.600px;color:#04080c">Proqramlaşdirma Şöbəsi</div>
<div class="t" id="r3n" style="left:341.500px;top:382.500px;font-size:14.600px;color:#04080c">3</div>
<div class="t" id="r3" style="left:379px;top:382.500px;font-size:14.600px;color:#04080c">Marketinq şöbəsi</div>
<div class="t ser" id="tsum" style="left:1002px;top:401.700px;font-size:14.700px;font-weight:bold;color:#04080c">Cəmi: 3</div>
</div>

<style>
.pi{position:absolute;width:16px;height:16px;top:130px;opacity:.88}
.psep{position:absolute;top:129px;width:1.600px;height:18.500px;background:#2c536a}
.nav{position:absolute;top:133px;height:11px}
#pclose{position:absolute;left:848px;top:127.500px;width:68px;height:22.500px;border:1px solid #69a0b4;border-radius:3px;background:linear-gradient(#7cb0c1,#72a8ba)}
#pclose span{position:absolute;left:20.500px;top:3.500px;font-size:12.400px;color:#102848;transform-origin:0 0}
#pzoom{position:absolute;left:468px;top:129.500px;width:49px;height:18px;background:#94bdcb}
#pzoom i{position:absolute;right:0;top:0;width:13px;height:18px;background:#86b0bd}
#pzoom span{position:absolute;left:3.500px;top:2.500px;font-size:12px;color:#0a1838;-webkit-text-stroke:.35px #0a1838;transform-origin:0 0;font-style:normal;letter-spacing:-.2px}
#ppg{position:absolute;left:723.500px;top:130.500px;width:38px;height:15.500px;background:#94bdcb}
#ppg span{position:absolute;left:1.500px;top:1px;font-size:12px;color:#0a1838;-webkit-text-stroke:.3px #0a1838}
#pstxt{position:absolute;left:295.500px;top:692px;font-size:12.400px;color:#132c48;transform-origin:0 0;white-space:nowrap}
.pssep{position:absolute;top:690px;width:1px;height:19px;background:#5388a0}
.cbtn{position:absolute;top:92px;height:18.500px;border:1px solid #5f94b4;border-top:none}
</style>
<!-- caption icon -->
<svg class="abs" style="left:291px;top:100.500px;width:17px;height:14px;opacity:.72" viewBox="0 0 17 14"><rect x=".5" y=".8" width="14.500" height="12.200" rx="1" fill="#eef2f6" stroke="#8a9aaa" stroke-width=".8"/><rect x=".5" y=".8" width="14.500" height="1.700" fill="#4a9ee0"/><circle cx="4" cy="5.600" r="1.400" fill="#2a78c8"/><path d="M1.800 9.800q0-2.600 2.200-2.600t2.200 2.600z" fill="#2a78c8"/><path d="M7.500 5.500h3.500M7.500 7.500h2.500M2 11.300h7.500" stroke="#7a8896" stroke-width="1"/><path d="M10 10.500l.8-2.700l4-4l1.900 1.900l-4 4z" fill="#f08a20"/><path d="M14.800 3.800l1-1l1.900 1.900l-1 1z" fill="#e03838"/><path d="M10 10.500l.8-2.700l1.900 1.900z" fill="#f6ead0"/></svg>
<!-- caption buttons -->
<div class="cbtn" style="left:1042px;width:28px;border-radius:0 0 0 4px;border-right:none"></div>
<div class="cbtn" style="left:1069.500px;width:28px"></div>
<div class="cbtn" style="left:1097px;width:31.500px;border-radius:0 0 4px 0;border-color:#5a2030;background:linear-gradient(#56202a,#471820)"></div>
<svg class="abs" style="left:1042px;top:92px;width:87px;height:19px" viewBox="0 0 87 19"><rect x="8.500" y="11.500" width="9" height="2.200" fill="#a8d0e0"/><rect x="35.500" y="5" width="11.500" height="9" fill="none" stroke="#a8d0e0" stroke-width="1.300"/><rect x="35.500" y="5" width="11.500" height="2.400" fill="#a8d0e0"/><path d="M65.500 5.500l10 8M75.500 5.500l-10 8" stroke="#b4d6e2" stroke-width="1.900"/></svg>
<!-- toolbar icons -->
<svg class="pi" style="left:298.500px" viewBox="0 0 16 16"><path d="M4 1.500h7.500l1.500 5.500h-11z" fill="#e8eef4" stroke="#5a7088" stroke-width=".8"/><path d="M5 3.500h5.500M4.500 5.300h6.500" stroke="#8090a0" stroke-width=".8"/><rect x=".8" y="7" width="14.400" height="6.500" rx="1.500" fill="#c0ccd8" stroke="#4a6080" stroke-width=".9"/><rect x="2.500" y="10.800" width="11" height="3.700" fill="#7a8ea4" stroke="#40546c" stroke-width=".7"/><rect x="10.300" y="9" width="2.600" height="2" fill="#20c030"/></svg>
<svg class="pi" style="left:321.500px" viewBox="0 0 16 16"><path d="M.8 14.500v-10.500h4.500l1.500 1.800h6.200v2.200" fill="#c8b050" stroke="#6a5a18" stroke-width=".8"/><path d="M.8 14.500l3-6.800h12l-3 6.800z" fill="#d8c060" stroke="#6a5a18" stroke-width=".8"/><path d="M9.500 3.200q3-3 5 .3M14.800 1.500v2.300h-2.300" fill="none" stroke="#3a5a80" stroke-width=".9"/></svg>
<svg class="pi" style="left:346px;top:130.500px;width:14.500px;height:14.500px" viewBox="0 0 16 16"><path d="M1 1h13l1.500 1.500v12.500h-14.500z" fill="#2a3ea8" stroke="#16206a" stroke-width=".8"/><rect x="3.500" y="1.500" width="9" height="6" fill="#a8c0d8"/><rect x="10" y="2.300" width="1.800" height="4" fill="#2a3ea8"/><rect x="4.500" y="10" width="7.500" height="5" fill="#16205a"/><rect x="6" y="11.200" width="2.300" height="3" fill="#c8d4e0"/></svg>
<svg class="pi" style="left:369px" viewBox="0 0 16 16"><path d="M1.500 3l2.500-2.500h6.500v12h-9z" fill="#d0dce8" stroke="#4a6280" stroke-width=".8"/><path d="M1.500 3h2.500v-2.500" fill="none" stroke="#4a6280" stroke-width=".8"/><path d="M10.500 7.500h3v4h2.300l-3.800 4.300l-3.800-4.300h2.300z" fill="#38a038" stroke="#186818" stroke-width=".7"/></svg>
<svg class="pi" style="left:391px" viewBox="0 0 16 16"><path d="M7.200 1c1.600 0 1.300 3.200.3 6c1.200 3 4 4.300 6.500 4.100c1.600 0 1.600 1.800 0 1.900c-2.500 0-5.500-1-7.500-.4c-1.800 1.600-3.200 3.600-4.600 3c-1.200-.8.700-2.800 3.600-3.400c1.200-2 1.800-4 1.800-5.500c-.9-2.600-1.200-5.700-.1-5.700z" fill="none" stroke="#c82020" stroke-width="1.300"/></svg>
<svg class="pi" style="left:414.500px" viewBox="0 0 16 16"><path d="M3 1.500h3.800v3.500l1 1.500v8h-7.300v-5.500l2.500-4z" fill="#2450a4" stroke="#12306c" stroke-width=".7"/><path d="M9.200 1.500h3.800v3.500l2.500 4v5.500h-7.300v-8l1-1.500z" fill="#2450a4" stroke="#12306c" stroke-width=".7"/><rect x="6.800" y="6.500" width="2.400" height="3" fill="#1c3c84"/><rect x="3.300" y="2" width="3.200" height="1.600" fill="#a0c0ec"/><rect x="9.500" y="2" width="3.200" height="1.600" fill="#a0c0ec"/><rect x="1.500" y="9.500" width="2" height="4.300" fill="#6c98dc"/><rect x="9.500" y="9.500" width="2" height="4.300" fill="#6c98dc"/></svg>
<div class="psep" style="left:435.800px"></div>
<svg class="pi" style="left:444.500px;top:129.500px" viewBox="0 0 16 16"><path d="M10 10l4.500 4.500" stroke="#8a8430" stroke-width="3" stroke-linecap="round"/><path d="M10 10l4.500 4.500" stroke="#c8c060" stroke-width="1.400" stroke-linecap="round"/><circle cx="6.500" cy="6.500" r="5.300" fill="#b8d8ec" stroke="#3a5878" stroke-width="1.100"/><path d="M3.500 6.500h6M6.500 3.500v6" stroke="#142c5c" stroke-width="1.700"/></svg>
<div id="pzoom"><i></i><span id="pzt">100%</span></div>
<svg class="abs" style="left:507px;top:137px;width:6px;height:4px" viewBox="0 0 6 4"><path d="M.3 .3h5.400l-2.700 3.400z" fill="#08101c"/></svg>
<svg class="pi" style="left:523.500px;top:129.500px" viewBox="0 0 16 16"><path d="M10 10l4.500 4.500" stroke="#8a8430" stroke-width="3" stroke-linecap="round"/><path d="M10 10l4.500 4.500" stroke="#c8c060" stroke-width="1.400" stroke-linecap="round"/><circle cx="6.500" cy="6.500" r="5.300" fill="#b8d8ec" stroke="#3a5878" stroke-width="1.100"/><path d="M3.500 6.500h6" stroke="#142c5c" stroke-width="1.700"/></svg>
<svg class="pi" style="left:547px" viewBox="0 0 16 16"><rect x=".6" y="1.600" width="14.800" height="12" fill="#c8d8ec" stroke="#2a4478" stroke-width="1"/><rect x="2.300" y="3.300" width="11.400" height="8.600" fill="#2858c8"/><path d="M4 5.500h6M4 7.600h8M4 9.700h7" stroke="#a8c4f0" stroke-width=".9"/></svg>
<div class="psep" style="left:568.800px"></div>
<svg class="pi" style="left:578.500px" viewBox="0 0 16 16"><rect x=".8" y="1.600" width="12.800" height="12.500" fill="#c0d4e8" stroke="#3a5a88" stroke-width=".9"/><path d="M4.500 4.500h1.500M7 4.500h5M6 7h1.500M8.500 7h3.500M6 9.500h1.500M8.500 9.500h3.500M4.500 12h1.500M7 12h5" stroke="#1c3c78" stroke-width="1"/></svg>
<svg class="pi" style="left:601.500px" viewBox="0 0 16 16"><rect x=".6" y="1" width="14.400" height="13.800" fill="#d0dcec" stroke="#2a4888" stroke-width=".9"/><rect x=".6" y="1" width="14.400" height="1.800" fill="#2848b8"/><rect x="1.500" y="4" width="3" height="2.700" fill="#2a4a90"/><rect x="1.500" y="7.700" width="3" height="2.700" fill="#2a4a90"/><rect x="1.500" y="11.300" width="3" height="2.700" fill="#2a4a90"/><path d="M6.500 5h7M6.500 7h7M6.500 9h7M6.500 11h7M6.500 13h7" stroke="#3858a8" stroke-width=".9"/></svg>
<svg class="pi" style="left:624.500px;top:129.500px" viewBox="0 0 16 16"><path d="M1 11.500v-9.500q2.500-2.500 5.500 0v9.500l-2.800-2.300z" fill="#a8bcc8" stroke="#3a5068" stroke-width=".8"/><rect x="6.500" y="3" width="8.700" height="10" fill="#b8d0e8" stroke="#1c3458" stroke-width="1"/></svg>
<svg class="pi" style="left:647.500px;top:129.500px" viewBox="0 0 16 16"><rect x=".8" y="3.500" width="10.500" height="12" fill="#d0dcf0" stroke="#2a4888" stroke-width=".9"/><path d="M2.500 7h7M2.500 9h7M2.500 11h7M2.500 13h7" stroke="#3060c0" stroke-width=".9"/><path d="M5 8.500l1-2.800l6.500-5l1.800 2.300l-6.500 5z" fill="#a8b040" stroke="#5a6018" stroke-width=".6"/><path d="M12.500 .700l1.200-.9l1.800 2.300l-1.200.9z" fill="#d03050"/><path d="M5 8.500l1-2.800l1.800 2.300z" fill="#f0e8d0"/></svg>
<div class="psep" style="left:668.600px"></div>
<svg class="nav" style="left:680.500px;width:11px" viewBox="0 0 11 11"><rect x=".3" y=".2" width="2.300" height="10.600" fill="#0a2458"/><path d="M10.500 .2v10.600l-6.800-5.300z" fill="#0a2458"/></svg>
<svg class="nav" style="left:704.500px;width:7px" viewBox="0 0 7 11"><path d="M6.800 .2v10.600l-6.600-5.300z" fill="#0a2458"/></svg>
<div id="ppg"><span>1</span></div>
<svg class="nav" style="left:776.800px;width:7px" viewBox="0 0 7 11"><path d="M.2 .2v10.600l6.600-5.300z" fill="#0a2458"/></svg>
<svg class="nav" style="left:796.800px;width:11px" viewBox="0 0 11 11"><rect x="8.200" y=".2" width="2.300" height="10.600" fill="#0a2458"/><path d="M.3 .2v10.600l6.800-5.300z" fill="#0a2458"/></svg>
<div id="pclose"><span id="pcl">Close</span></div>
<!-- scrollbar -->
<svg class="abs" style="left:1109px;top:154px;width:17px;height:534px" viewBox="0 0 17 534"><path d="M4.500 10l4-4.500l4 4.500z" fill="#143c68"/><path d="M4.500 522l4 4.500l4-4.500z" fill="#143c68"/><rect x="3.300" y="20" width="10.800" height="110" rx="2" fill="#1a5688"/></svg>
<!-- status -->
<div id="pstxt">Page 1 of 2</div>
<div class="pssep" style="left:488px"></div><div class="pssep" style="left:806.500px"></div>
<svg class="abs" style="left:1113.500px;top:695.500px;width:13px;height:12.500px" viewBox="0 0 12 11"><g fill="#1c4468"><rect x="9.500" y="0" width="1.500" height="1.500"/><rect x="7" y="2.500" width="1.500" height="1.500"/><rect x="9.500" y="2.500" width="1.500" height="1.500"/><rect x="4.500" y="5" width="1.500" height="1.500"/><rect x="7" y="5" width="1.500" height="1.500"/><rect x="9.500" y="5" width="1.500" height="1.500"/><rect x="2" y="7.500" width="1.500" height="1.500"/><rect x="4.500" y="7.500" width="1.500" height="1.500"/><rect x="7" y="7.500" width="1.500" height="1.500"/><rect x="9.500" y="7.500" width="1.500" height="1.500"/></g></svg>

<div id="statusbar">
<span id="s1" style="left:5px">Copyright. ARBAY Ltd, 2020</span>
<span id="s2" style="left:254px">İstifadəçi: Super admin</span>
</div>
<div class="ssep" style="left:247.500px"></div>
<div class="abs" style="left:1101px;top:719px;width:60px;height:19px;background:linear-gradient(90deg,#e26000,#e06000 55%,#c65000)"></div>
<svg class="abs" style="left:1117.500px;top:723.500px;width:16px;height:10px" viewBox="0 0 16 10"><rect x=".3" y=".3" width="15" height="9.400" rx=".8" fill="#fdfdfd"/><rect x="2.500" y="3.200" width="6.500" height="1.200" fill="#202020"/><rect x="2.500" y="5.800" width="6.500" height="1.200" fill="#202020"/><rect x="11.300" y="1.800" width="2.300" height="2" fill="#202020"/></svg>
<div class="ssep" style="left:1210.500px"></div><div class="ssep" style="left:1295.300px"></div>
<div id="stx">
<span id="s3" style="left:1137.300px;color:#ffd8c8">3</span>
<span id="s4" style="left:1178.300px">EN</span>
<span id="s5" style="left:1220.400px">28/01/2020</span>
<span id="s6" style="left:1305.500px">12:20:17</span>
</div>
<!-- main caption icon & buttons -->
<svg class="abs" style="left:0;top:3px;width:17px;height:14px" viewBox="0 0 17 14"><rect x=".5" y=".8" width="14.500" height="12.200" rx="1" fill="#eef2f6" stroke="#8a9aaa" stroke-width=".8"/><rect x=".5" y=".8" width="14.500" height="1.700" fill="#4a9ee0"/><circle cx="4" cy="5.600" r="1.400" fill="#2a78c8"/><path d="M1.800 9.800q0-2.600 2.200-2.600t2.200 2.600z" fill="#2a78c8"/><path d="M7.500 5.500h3.500M7.500 7.500h2.500M2 11.300h7.500" stroke="#7a8896" stroke-width="1"/><path d="M10 10.500l.8-2.700l4-4l1.900 1.900l-4 4z" fill="#f08a20"/><path d="M14.800 3.800l1-1l1.900 1.900l-1 1z" fill="#e03838"/><path d="M10 10.500l.8-2.700l1.900 1.900z" fill="#f6ead0"/></svg>
<div class="abs" style="left:1282px;top:0;width:28px;height:18px;border:1px solid #7ea4c0;border-top:none;border-radius:0 0 0 4px;border-right:none"></div>
<div class="abs" style="left:1309px;top:0;width:28px;height:18px;border:1px solid #7ea4c0;border-top:none"></div>
<div class="abs" style="left:1337px;top:0;width:28px;height:18px;background:linear-gradient(#8e4048,#7c3a40)"></div>
<svg class="abs" style="left:1282px;top:0;width:83px;height:18px" viewBox="0 0 83 18"><rect x="9" y="11.800" width="8.500" height="2.200" fill="#dfe5ea"/><rect x="40.500" y="4.700" width="7" height="7" rx="1" fill="none" stroke="#dfe5ea" stroke-width="1.100"/><rect x="34.500" y="7.600" width="8.500" height="6" rx="1" fill="#8a9ba8" stroke="#dfe5ea" stroke-width="1.100"/><path d="M64 4.700l11.500 8M75.500 4.700l-11.500 8" stroke="#e4e4e6" stroke-width="2"/></svg>
<!-- left splitter -->
<div class="abs" style="left:1px;top:277px;width:7.500px;height:252px;border:1px solid #10141c;background:#e9eff6"></div>
<svg class="abs" style="left:1px;top:277px;width:8px;height:252px" viewBox="0 0 8 252"><path d="M2.300 5.800l3.300 2.700l-3.300 2.700z" fill="#d86808"/><path d="M2.300 241.800l3.300 2.700l-3.300 2.700z" fill="#d86808"/><path d="M3.500 15v221" stroke="#d86808" stroke-width="1" stroke-dasharray="1 2"/></svg>

</body>
</html>
